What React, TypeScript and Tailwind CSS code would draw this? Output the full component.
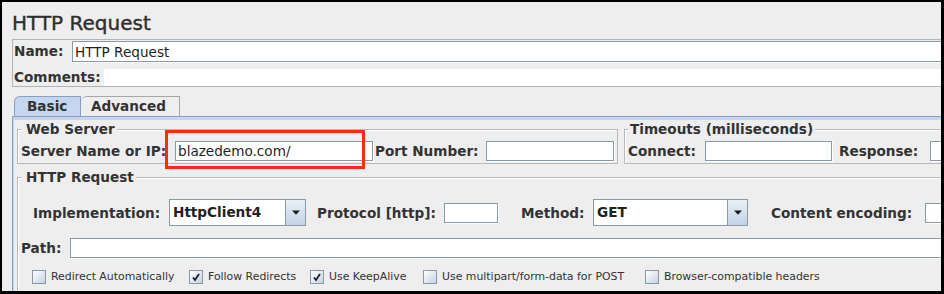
import type { ReactNode } from "react";

const label = "shrink-0 whitespace-nowrap text-[13.6px] font-bold leading-[16px] text-[#333333]";
const fieldBox = "shrink-0 border border-[#8b99a7] bg-white shadow-[1px_1px_0_#ffffff]";

const Field = ({ className, value }: { className: string; value?: string }) => (
	<div className={`${fieldBox} flex items-center overflow-hidden pl-[2px] text-[13.6px] leading-[16px] whitespace-nowrap text-[#1e1e1e] ${className}`}>
		{value}
	</div>
);

const Combo = ({ className, value }: { className: string; value: string }) => (
	<div className={`flex h-[27px] shrink-0 border border-[#8b99a7] bg-white ${className}`}>
		<span className="flex flex-1 items-center pl-[3px] text-[13.6px] font-bold text-[#222222]">{value}</span>
		<span className="flex w-[20px] items-center justify-center border-l border-[#8b99a7] bg-linear-to-b from-[#e9f0f7] to-[#c3d3e4]">
			<svg width="8" height="5" viewBox="0 0 8 5">
				<path d="M0 0.5 H8 L4 4.8 Z" fill="#1a1a1a" />
			</svg>
		</span>
	</div>
);

const Check = ({ checked, text, className = "" }: { checked?: boolean; text: string; className?: string }) => (
	<div className={`flex shrink-0 items-center ${className}`}>
		<span className="flex h-[14px] w-[14px] items-center justify-center border border-[#8b99a7] bg-linear-to-br from-[#ffffff] to-[#c4d3e3]">
			{checked && (
				<svg width="10" height="10" viewBox="0 0 10 10">
					<path d="M2 5.5 L4 8 L8 2" fill="none" stroke="#1f1f1f" strokeWidth="1.8" />
				</svg>
			)}
		</span>
		<span className="ml-[5px] whitespace-nowrap text-[10.9px] leading-[14px] text-[#333333]">{text}</span>
	</div>
);

const Group = ({
	title,
	className,
	legendClass = "pl-[5px] pr-[2px]",
	children,
}: {
	title: string;
	className: string;
	legendClass?: string;
	children: ReactNode;
}) => (
	<fieldset className={`shrink-0 border border-[#b9b9b9] pl-[3px] shadow-[inset_1px_1px_0_#ffffff] ${className}`}>
		<legend className={`${legendClass} bg-[#eeeeee] text-[13.6px] font-bold leading-[16px] text-[#333333]`}>{title}</legend>
		{children}
	</fieldset>
);

export default function App() {
	const checks = [
		{ text: "Redirect Automatically", checked: false, w: "w-[157px]" },
		{ text: "Follow Redirects", checked: true, w: "w-[121px]" },
		{ text: "Use KeepAlive", checked: true, w: "w-[113px]" },
		{ text: "Use multipart/form-data for POST", checked: false, w: "w-[222px]" },
		{ text: "Browser-compatible headers", checked: false, w: "w-[200px]" },
	];

	return (
		<div className="relative h-[294px] w-[944px] overflow-hidden border-t-2 border-r-[3px] border-b-[3px] border-l-2 border-black bg-[#eeeeee] font-['DejaVu_Sans',sans-serif]">
			<div className="w-[1000px] pt-[9px] pl-[10px]">
				<h1 className="text-[20px] leading-[24px] text-[#2e2e2e] [-webkit-text-stroke:0.4px_#2e2e2e]">HTTP Request</h1>

				{/* Name / Comments */}
				<div className="mt-[4px] border border-[#b4b4b4] pl-[1px]">
					<div className="flex pt-[1px]">
						<span className={`${label} w-[58px] leading-[21px]`}>Name:</span>
						<Field className="h-[21px] flex-1" value="HTTP Request" />
					</div>
					<div className="flex pt-[7px]">
						<span className={`${label} w-[90px] leading-[17px]`}>Comments:</span>
						<div className="h-[17px] flex-1 bg-white" />
					</div>
				</div>

				{/* Tabs */}
				<div className="mt-[9px] flex h-[20px] pl-[2px]">
					<div className="flex w-[67px] items-center rounded-tl-[6px] border border-b-0 border-[#8a9fc2] bg-[#c4d7ef] pl-[12px] text-[13.6px] font-bold text-[#333333]">
						Basic
					</div>
					<div className="flex w-[99px] items-center rounded-tl-[6px] border border-b-0 border-l-0 border-[#a7a7a7] bg-[#eeeeee] pl-[10px] text-[13.6px] font-bold text-[#333333]">
						Advanced
					</div>
				</div>
				<div className="border-t border-l border-[#8a9fc2]">
					<div className="border-t-[3px] border-l border-[#c4d7ef] pt-[1px] pl-[3px]">
						<div className="flex">
							<Group title="Web Server" className="w-[601px] pb-[2px]">
								<div className="mt-[4px] flex h-[20px] items-center">
									<span className={`${label} w-[154px]`}>Server Name or IP:</span>
									<Field className="h-[20px] w-[198px]" value="blazedemo.com/" />
									<span className={`${label} w-[113px] pl-[2px]`}>Port Number:</span>
									<Field className="h-[20px] w-[128px]" />
								</div>
							</Group>
							<Group title="Timeouts (milliseconds)" className="ml-[6px] w-[400px] pb-[2px]" legendClass="pl-[2px] pr-[2px]">
								<div className="mt-[4px] flex h-[20px] items-center">
									<span className={`${label} w-[77px]`}>Connect:</span>
									<Field className="h-[20px] w-[127px]" />
									<span className={`${label} w-[98px] pl-[7px]`}>Response:</span>
									<Field className="h-[20px] w-[60px]" />
								</div>
							</Group>
						</div>

						<Group title="HTTP Request" className="mt-[5px] w-[985px] pb-[20px]">
							<div className="mt-[14px] flex h-[27px] items-center pl-[12px]">
								<span className={`${label} w-[136px]`}>Implementation:</span>
								<Combo className="w-[137px]" value="HttpClient4" />
								<span className={`${label} ml-[11px] w-[127px]`}>Protocol [http]:</span>
								<Field className="h-[20px] w-[54px]" />
								<span className={`${label} ml-[23px] w-[72px]`}>Method:</span>
								<Combo className="w-[155px]" value="GET" />
								<span className={`${label} ml-[23px] w-[154px]`}>Content encoding:</span>
								<Field className="h-[20px] w-[60px]" />
							</div>
							<div className="mt-[12px] flex h-[20px] items-center">
								<span className={`${label} w-[49px]`}>Path:</span>
								<Field className="h-[20px] flex-1" />
							</div>
							<div className="mt-[12px] flex pl-[11px]">
								{checks.map((c) => (
									<Check key={c.text} text={c.text} checked={c.checked} className={c.w} />
								))}
							</div>
						</Group>
					</div>
				</div>
			</div>

			{/* red highlight around the server field */}
			<div className="absolute top-[128px] left-[163px] h-[39px] w-[200px] border-[3px] border-[#ff2a12]" />
		</div>
	);
}
